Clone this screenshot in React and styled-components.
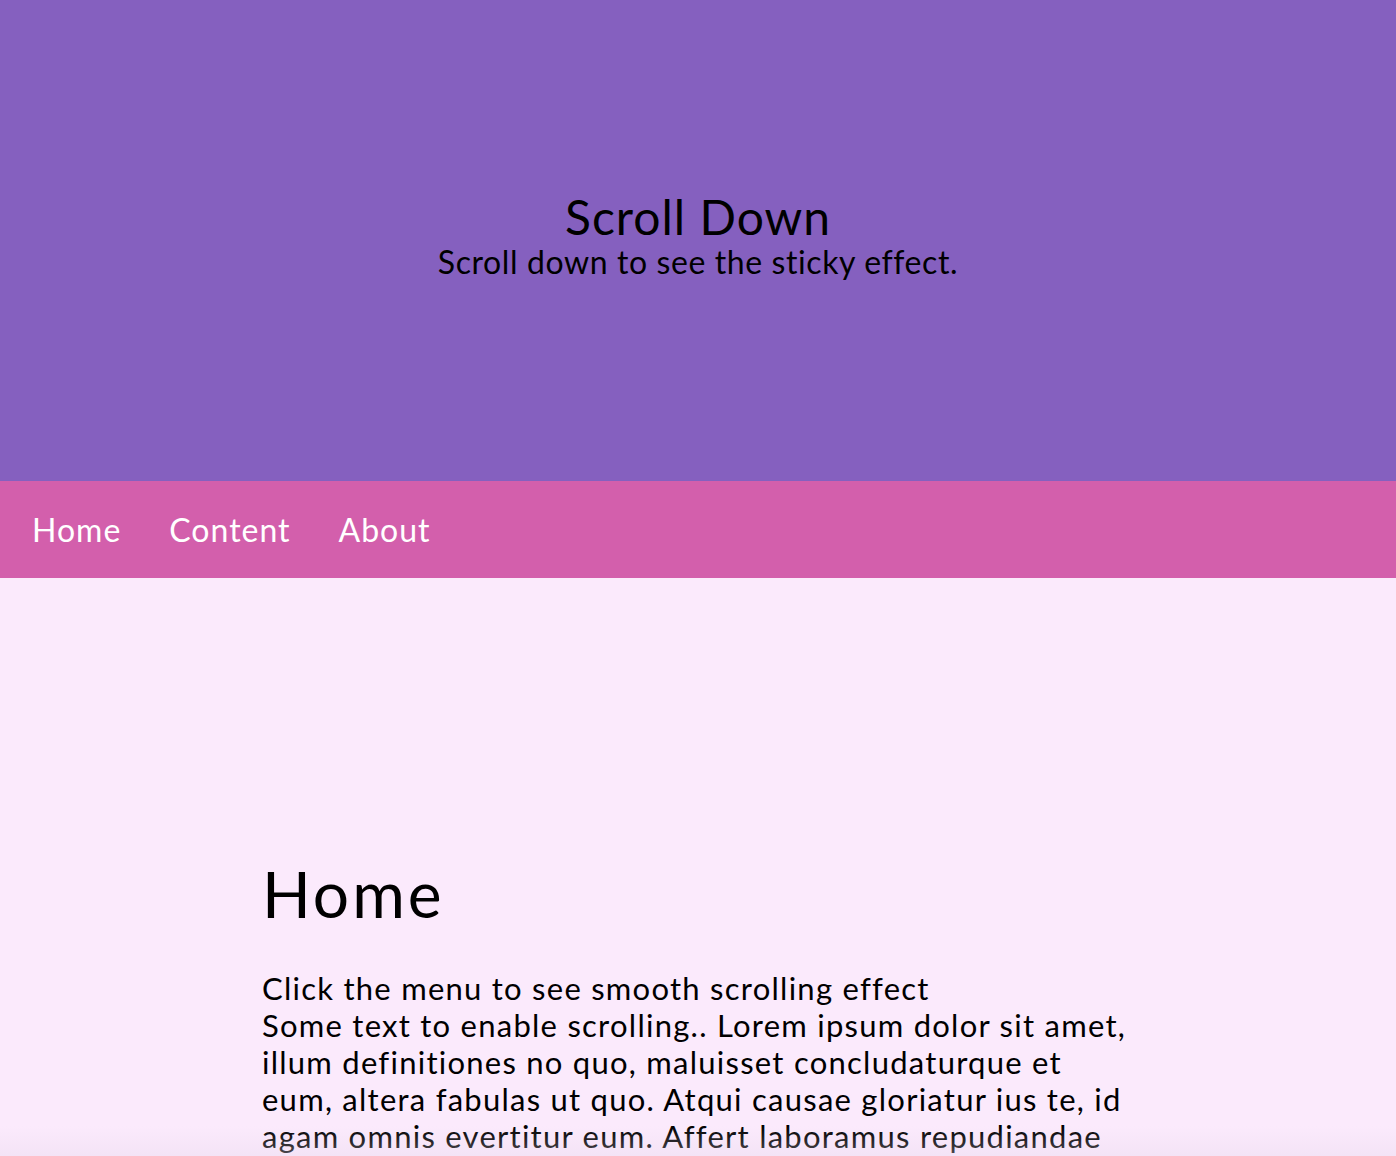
import React from "react";
import styled, { createGlobalStyle } from "styled-components";

const Global = createGlobalStyle`
  html, body { margin: 0; padding: 0; }
  body {
    font-family: "Lato", "Open Sans", sans-serif;
    background: #fbeafc;
    color: #000;
    overflow: hidden;
  }
`;

const Page = styled.div`
  height: 1156px;
  overflow: hidden;
  position: relative;
  background: #fbeafc;
`;

const Hero = styled.header`
  height: 481px;
  background: #8560bf;
  display: flex;
  flex-direction: column;
  align-items: center;
  justify-content: center;
  text-align: center;
`;

const HeroTitle = styled.h1`
  margin: -8px 0 0;
  font-weight: 400;
  font-size: 48px;
  line-height: 50px;
  letter-spacing: 1px;
`;

const HeroSub = styled.p`
  margin: 0;
  font-size: 32px;
  line-height: 40px;
  letter-spacing: 0.6px;
`;

const Nav = styled.nav`
  height: 97px;
  background: #d35fac;
  display: flex;
  align-items: center;
  padding: 0 32px;
  gap: 48px;
`;

const NavLink = styled.a`
  color: #fff;
  font-size: 32px;
  letter-spacing: 1px;
  text-decoration: none;
`;

const Section = styled.section`
  padding: 280px 262px 0;
`;

const Heading = styled.h2`
  margin: 0 0 40px;
  font-weight: 400;
  font-size: 64px;
  line-height: 72px;
  letter-spacing: 3px;
`;

const Body = styled.p`
  margin: 0;
  font-size: 31px;
  line-height: 37px;
  letter-spacing: 1.25px;
`;

const BottomShade = styled.div`
  position: absolute;
  left: 0;
  right: 0;
  bottom: 0;
  height: 30px;
  background: linear-gradient(to bottom, rgba(230, 215, 235, 0), rgba(230, 215, 235, 0.35));
  pointer-events: none;
`;

export default function App() {
  return (
    <Page>
      <Global />
      <Hero>
        <HeroTitle>Scroll Down</HeroTitle>
        <HeroSub>Scroll down to see the sticky effect.</HeroSub>
      </Hero>
      <Nav>
        <NavLink href="#home">Home</NavLink>
        <NavLink href="#content">Content</NavLink>
        <NavLink href="#about">About</NavLink>
      </Nav>
      <Section id="home">
        <Heading>Home</Heading>
        <Body>
          Click the menu to see smooth scrolling effect
          <br />
          Some text to enable scrolling.. Lorem ipsum dolor sit amet, illum definitiones no quo, maluisset
          concludaturque et eum, altera fabulas ut quo. Atqui causae gloriatur ius te, id agam omnis evertitur eum.
          Affert laboramus repudiandae nec et. Inciderint efficiantur his ad. Eum no molestiae voluptatibus.
        </Body>
      </Section>
      <BottomShade />
    </Page>
  );
}
